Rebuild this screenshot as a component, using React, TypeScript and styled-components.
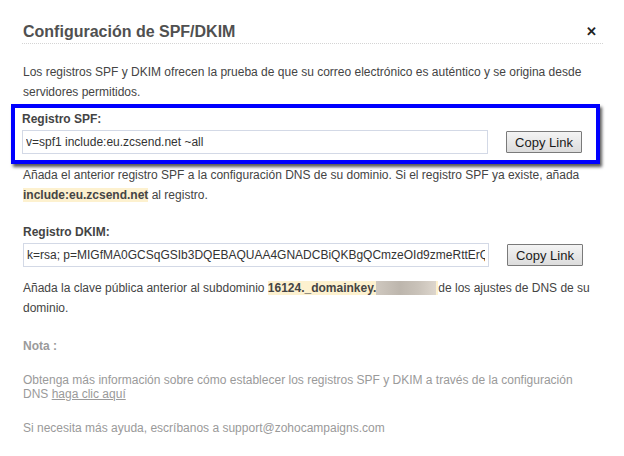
import styled, { createGlobalStyle } from "styled-components";

const GlobalStyle = createGlobalStyle`
  html, body {
    margin: 0;
    padding: 0;
    background: #fff;
  }
  body {
    font-family: "Liberation Sans", Arial, sans-serif;
    color: #444;
  }
`;

function CopyRow({ value }: { value: string }) {
  return (
    <Row>
      <RecordInput readOnly value={value} />
      <CopyButton type="button">Copy Link</CopyButton>
    </Row>
  );
}

export default function App() {
  return (
    <Dialog>
      <GlobalStyle />
      <Header>
        <Title>Configuración de SPF/DKIM</Title>
        <Close aria-label="close">✕</Close>
      </Header>

      <Intro>
        Los registros SPF y DKIM ofrecen la prueba de que su correo electrónico es auténtico y se origina desde
        servidores permitidos.
      </Intro>

      <Marked>
        <Label>Registro SPF:</Label>
        <CopyRow value="v=spf1 include:eu.zcsend.net ~all" />
      </Marked>
      <Help>
        Añada el anterior registro SPF a la configuración DNS de su dominio. Si el registro SPF ya existe, añada{" "}
        <Hl>include:eu.zcsend.net</Hl> al registro.
      </Help>

      <Section>
        <Label>Registro DKIM:</Label>
        <CopyRow value="k=rsa; p=MIGfMA0GCSqGSIb3DQEBAQUAA4GNADCBiQKBgQCmzeOId9zmeRttErQfA7XW" />
      </Section>
      <Help $gap={11}>
        Añada la clave pública anterior al subdominio{" "}
        <Hl>
          16124._domainkey.<Blur />
        </Hl>
        de los ajustes de DNS de su dominio.
      </Help>

      <Note>
        <NoteTitle>Nota :</NoteTitle>
        <NoteText>
          Obtenga más información sobre cómo establecer los registros SPF y DKIM a través de la configuración
          DNS <NoteLink href="#">haga clic aquí</NoteLink>
        </NoteText>
        <NoteText>Si necesita más ayuda, escríbanos a support@zohocampaigns.com</NoteText>
      </Note>
    </Dialog>
  );
}

const Dialog = styled.div`
  width: 624px;
  box-sizing: border-box;
  padding: 0 21px 20px 23px;
`;

const Header = styled.div`
  display: flex;
  align-items: center;
  justify-content: space-between;
  padding-top: 22px;
  padding-bottom: 1px;
  margin-left: -1px;
  padding-left: 1px;
  border-bottom: 1px dotted #d4d4d4;
`;

const Title = styled.h2`
  margin: 0;
  font-size: 16px;
  line-height: 20px;
  font-weight: bold;
  color: #505050;
`;

const Close = styled.span`
  font-size: 13px;
  font-weight: bold;
  color: #222;
  margin-right: 6px;
  line-height: 20px;
`;

const Intro = styled.p`
  margin: 18px 0 0;
  font-size: 12px;
  line-height: 20px;
`;

const Marked = styled.div`
  margin: 2px 3px 0 -12px;
  padding: 3px 14px 6px 7px;
  border: 4px solid #0000ff;
  box-shadow: 2px 3px 3px rgba(0, 0, 0, 0.65);
`;

const Section = styled.div`
  margin-top: 19px;
`;

const Label = styled.div`
  font-size: 12px;
  line-height: 16px;
  font-weight: bold;
  color: #444;
  margin-bottom: 3px;
`;

const Row = styled.div`
  display: flex;
  align-items: center;
  gap: 18px;
`;

const RecordInput = styled.input`
  width: 466px;
  height: 24px;
  box-sizing: border-box;
  border: 1px solid #d3d9e6;
  padding: 0 3px;
  font-family: "Liberation Sans", Arial, sans-serif;
  font-size: 12px;
  color: #333;
  outline: none;
`;

const CopyButton = styled.button`
  width: 76px;
  height: 22px;
  padding: 0;
  border: 1px solid #7a7a7a;
  border-radius: 1px;
  background: linear-gradient(#f4f4f4, #dcdcdc);
  font-family: "Liberation Sans", Arial, sans-serif;
  font-size: 13px;
  color: #1a1a1a;
`;

const Help = styled.p<{ $gap?: number }>`
  margin: ${(p) => p.$gap ?? 1}px 0 0;
  font-size: 12px;
  line-height: 20px;
`;

const Hl = styled.span`
  background: #fdf1cf;
  font-weight: bold;
`;

const Blur = styled.span`
  display: inline-block;
  width: 60px;
  height: 14px;
  margin-right: 2px;
  vertical-align: -3px;
  background: linear-gradient(90deg, #cfc8bf, #bdb6ad 40%, #c9c2b9 70%, #ddd6cd);
`;

const Note = styled.div`
  margin-top: 20px;
  color: #9a9a9a;
  font-size: 12px;
`;

const NoteTitle = styled.div`
  font-weight: bold;
  line-height: 16px;
  margin-bottom: 19px;
`;

const NoteText = styled.p`
  max-width: 556px;
  margin: 0 0 20px;
  line-height: 14px;
`;

const NoteLink = styled.a`
  color: #9a9a9a;
  text-decoration: underline;
`;
